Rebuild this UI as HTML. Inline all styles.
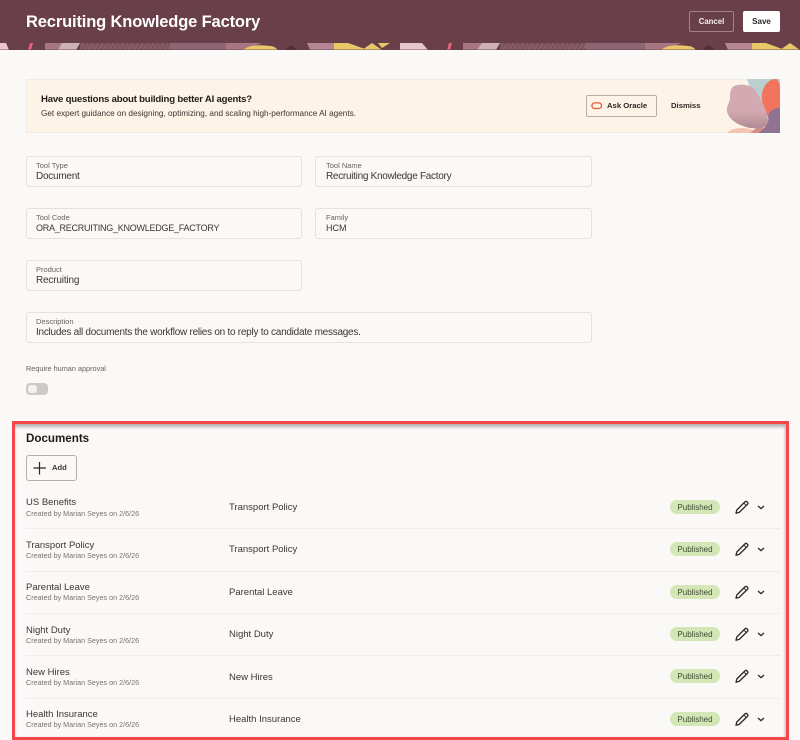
<!DOCTYPE html>
<html lang="en"><head><meta charset="utf-8"><title>Recruiting Knowledge Factory</title>
<style>
html,body{margin:0;padding:0}
body{width:800px;height:740px;position:relative;overflow:hidden;background:#fbf9f8;font-family:"Liberation Sans",sans-serif;color:#2b2825}
.a{position:absolute;white-space:nowrap}
.f{position:absolute;box-sizing:border-box;height:31px;border:1px solid #e4e2df;border-radius:3px;background:#fbf9f8}
.f i{position:absolute;left:9px;top:4px;font:normal 7.5px/9px "Liberation Sans",sans-serif;color:#66625e;white-space:nowrap}
.f b{position:absolute;left:9px;top:13px;font:normal 10px/13px "Liberation Sans",sans-serif;color:#3a3632;white-space:nowrap;letter-spacing:-.25px}
.t{left:26px;font-size:9.5px;line-height:12px;color:#3a3632}
.s{left:26px;font-size:7.2px;line-height:9px;color:#77736f}
.n{left:229px;font-size:9.5px;line-height:12px;color:#3a3632}
.p{left:670px;width:50px;height:14px;border-radius:7px;background:#d3e6b5;color:#3f4a33;font-size:8px;line-height:15px;text-align:center}
.d{left:26px;width:755px;height:1px;background:#f0eeeb}
svg{position:absolute;display:block}
</style></head><body>

<div class="a" style="left:0;top:0;width:800px;height:50px;background:#693f4a"></div>
<svg style="left:0;top:43px" width="800" height="7" viewBox="0 0 800 7">
<defs><pattern id="h" width="5" height="7" patternUnits="userSpaceOnUse"><rect width="5" height="7" fill="#7a4e59"/><path d="M0 7L3 0M3 7L5 2" stroke="#936c77" stroke-width=".8"/></pattern></defs>
<rect width="800" height="7" fill="#693f4a"/>
<path d="M0 0H6L9 7H0Z" fill="#eac6cd"/><path d="M28 7L30 0H33L31 7Z" fill="#e8647c"/>
<path d="M45 0H68L60 7H45Z" fill="#a87683"/><path d="M62 0H80L76 7H58Z" fill="#cdb1b9"/>
<rect x="80" width="90" height="7" fill="url(#h)"/><path d="M170 0H226V7H170Z" fill="#8c6672"/>
<path d="M226 0H262L243 7H226Z" fill="#a87683"/>
<path d="M243 7C250 1 262 2 270 3C274 3 276 5 278 7Z" fill="#e8c869"/>
<path d="M285 7L291 2L298 7Z" fill="#4f2e38"/>
<path d="M307 0H335L348 7H310Z" fill="#b68593"/>
<path d="M334 0H348L368 7H334Z" fill="#e8c869"/><path d="M362 7L372 0L382 7Z" fill="#e8c869"/><path d="M378 0H390L382 5Z" fill="#e8c869"/>
<path d="M400 0H422L428 7H400Z" fill="#e8c6cd"/><path d="M447 7L449 0H452L450 7Z" fill="#e8647c"/>
<path d="M463 0H490L480 7H463Z" fill="#a87683"/><path d="M482 0H500L496 7H477Z" fill="#cdb1b9"/>
<rect x="500" width="85" height="7" fill="url(#h)"/><path d="M585 0H645V7H585Z" fill="#8c6672"/>
<path d="M645 0H682L662 7H645Z" fill="#a87683"/>
<path d="M661 7C668 1 680 2 688 3C692 3 694 5 696 7Z" fill="#e8c869"/>
<path d="M702 7L708 2L716 7Z" fill="#4f2e38"/>
<path d="M725 0H752L765 7H728Z" fill="#b68593"/>
<path d="M752 0H766L785 7H752Z" fill="#e8c869"/><path d="M780 7L790 0L800 7Z" fill="#e8c869"/>
<rect y="6.4" width="800" height=".6" fill="#693f4a" opacity=".7"/>
</svg>
<div class="a" style="left:26px;top:11px;font-size:16.5px;line-height:22px;font-weight:700;color:#fff;letter-spacing:-.15px">Recruiting Knowledge Factory</div>
<div class="a" style="left:689px;top:11px;width:45px;height:21px;box-sizing:border-box;border:1px solid #a58189;border-radius:2px;color:#f5eeee;font-size:7.8px;font-weight:700;line-height:19px;text-align:center">Cancel</div>
<div class="a" style="left:743px;top:11px;width:37px;height:21px;background:#fff;border-radius:2px;color:#2b2825;font-size:8px;font-weight:700;line-height:21px;text-align:center">Save</div>

<div class="a" style="left:26px;top:79px;width:754px;height:54px;box-sizing:border-box;background:#fdf3e6;border:1px solid #f0ebe4;overflow:hidden"></div>
<svg style="left:700px;top:79px" width="80" height="54" viewBox="0 0 80 54">
<defs><linearGradient id="g" x1="0" y1="0" x2="0" y2="1"><stop offset=".6" stop-color="#d4aab2"/><stop offset="1" stop-color="#b08a92"/></linearGradient></defs>
<path d="M47 0H80V36H60Z" fill="#b9cfd0"/>
<path d="M62 14C64 5 70 0 76 0C80 2 80 8 80 14V38H68C64 30 61 22 62 14Z" fill="#f2745c"/>
<path d="M27 54C32 49 42 48 50 50L60 54Z" fill="#f5c5b0"/>
<path d="M50 54L56 49H68V54Z" fill="#d98f80"/>
<path d="M34 7C42 4 52 6 56 12C62 22 68 34 68 42C68 50 60 50 50 49C40 47 30 42 27 33C26 27 30 24 30 18C30 12 31 9 34 7Z" fill="url(#g)"/>
<path d="M68 37C69 32 74 29 80 29V54H59C62 50 70 47 68 37Z" fill="#8e7393"/>
</svg>
<div class="a" style="left:41px;top:94px;font-size:9.6px;line-height:12px;font-weight:700;color:#1f1c19;letter-spacing:-.2px">Have questions about building better AI agents?</div>
<div class="a" style="left:41px;top:108px;font-size:8.2px;line-height:11px;color:#3a3632">Get expert guidance on designing, optimizing, and scaling high-performance AI agents.</div>
<div class="a" style="left:586px;top:95px;width:71px;height:22px;box-sizing:border-box;border:1px solid #b4afa9;border-radius:2px"></div>
<svg style="left:591px;top:101px" width="12" height="10" viewBox="0 0 12 10"><rect x=".9" y="1.9" width="9.6" height="5.6" rx="2.8" fill="none" stroke="#e8573f" stroke-width="1.3"/></svg>
<div class="a" style="left:607px;top:100px;font-size:7.7px;line-height:12px;font-weight:700;color:#2b2825">Ask Oracle</div>
<div class="a" style="left:671px;top:100px;font-size:7.7px;line-height:12px;font-weight:700;color:#2b2825">Dismiss</div>

<div class="f" style="left:26px;top:156px;width:276px"><i>Tool Type</i><b>Document</b></div>
<div class="f" style="left:315px;top:156px;width:277px"><i style="left:10px">Tool Name</i><b style="left:10px;letter-spacing:-.29px">Recruiting Knowledge Factory</b></div>
<div class="f" style="left:26px;top:208px;width:276px"><i>Tool Code</i><b style="font-size:9px;letter-spacing:-.25px">ORA_RECRUITING_KNOWLEDGE_FACTORY</b></div>
<div class="f" style="left:315px;top:208px;width:277px"><i style="left:10px">Family</i><b style="left:10px;font-size:9px;letter-spacing:0">HCM</b></div>
<div class="f" style="left:26px;top:260px;width:276px"><i>Product</i><b style="letter-spacing:-.18px">Recruiting</b></div>
<div class="f" style="left:26px;top:312px;width:566px"><i>Description</i><b style="letter-spacing:-.26px">Includes all documents the workflow relies on to reply to candidate messages.</b></div>
<div class="a" style="left:26px;top:364px;font-size:7.3px;line-height:9px;color:#66625e">Require human approval</div>
<div class="a" style="left:26px;top:383px;width:22px;height:12px;border-radius:4px;background:#cdcbc8"></div>
<div class="a" style="left:28px;top:385px;width:9px;height:8px;border-radius:3px;background:#f4f2f0"></div>

<div class="a" style="left:12px;top:421px;width:777px;height:319px;box-sizing:border-box;border:3px solid #f64749;box-shadow:inset 0 4px 3px -1px #b4b2b0,inset -2px 0 2px -1px #c0bebc"></div>
<div class="a" style="left:26px;top:431px;font-size:11.6px;line-height:15px;font-weight:700;color:#1f1c19">Documents</div>
<div class="a" style="left:26px;top:455px;width:51px;height:26px;box-sizing:border-box;border:1px solid #b4afa9;border-radius:3px"></div>
<svg style="left:33px;top:460px" width="14" height="16" viewBox="0 0 14 16"><path d="M6.5 2V14.5M.5 8H12.8" fill="none" stroke="#2b2825" stroke-width="1.2"/></svg>
<div class="a" style="left:52px;top:462px;font-size:7.6px;line-height:12px;font-weight:700;color:#3a3632">Add</div>

<div class="a t" style="top:497px">US Benefits</div><div class="a s" style="top:509px">Created by Marian Seyes on 2/6/26</div><div class="a n" style="top:502px">Transport Policy</div><div class="a p" style="top:500px">Published</div>
<div class="a d" style="top:528px"></div>
<div class="a t" style="top:540px">Transport Policy</div><div class="a s" style="top:551px">Created by Marian Seyes on 2/6/26</div><div class="a n" style="top:544px">Transport Policy</div><div class="a p" style="top:542px">Published</div>
<div class="a d" style="top:571px"></div>
<div class="a t" style="top:582px">Parental Leave</div><div class="a s" style="top:593px">Created by Marian Seyes on 2/6/26</div><div class="a n" style="top:587px">Parental Leave</div><div class="a p" style="top:585px">Published</div>
<div class="a d" style="top:613px"></div>
<div class="a t" style="top:625px">Night Duty</div><div class="a s" style="top:636px">Created by Marian Seyes on 2/6/26</div><div class="a n" style="top:629px">Night Duty</div><div class="a p" style="top:627px">Published</div>
<div class="a d" style="top:655px"></div>
<div class="a t" style="top:667px">New Hires</div><div class="a s" style="top:678px">Created by Marian Seyes on 2/6/26</div><div class="a n" style="top:672px">New Hires</div><div class="a p" style="top:669px">Published</div>
<div class="a d" style="top:698px"></div>
<div class="a t" style="top:709px">Health Insurance</div><div class="a s" style="top:720px">Created by Marian Seyes on 2/6/26</div><div class="a n" style="top:714px">Health Insurance</div><div class="a p" style="top:712px">Published</div>

<svg style="left:733px;top:498px" width="36" height="18" viewBox="0 0 36 18"><g fill="none" stroke="#2b2825"><path d="M3 15.2L3.8 12L11.8 4C12.6 3.2 13.4 3.2 14.1 3.9L14.4 4.2C15.1 4.9 15.1 5.7 14.3 6.5L6.2 14.4Z" stroke-width="1.3" stroke-linejoin="round"/><path d="M10.8 5L13.2 7.4" stroke-width=".9"/><path d="M25 8L28 10.6L31 8" stroke-width="1.3"/></g></svg>
<svg style="left:733px;top:540px" width="36" height="18" viewBox="0 0 36 18"><g fill="none" stroke="#2b2825"><path d="M3 15.2L3.8 12L11.8 4C12.6 3.2 13.4 3.2 14.1 3.9L14.4 4.2C15.1 4.9 15.1 5.7 14.3 6.5L6.2 14.4Z" stroke-width="1.3" stroke-linejoin="round"/><path d="M10.8 5L13.2 7.4" stroke-width=".9"/><path d="M25 8L28 10.6L31 8" stroke-width="1.3"/></g></svg>
<svg style="left:733px;top:583px" width="36" height="18" viewBox="0 0 36 18"><g fill="none" stroke="#2b2825"><path d="M3 15.2L3.8 12L11.8 4C12.6 3.2 13.4 3.2 14.1 3.9L14.4 4.2C15.1 4.9 15.1 5.7 14.3 6.5L6.2 14.4Z" stroke-width="1.3" stroke-linejoin="round"/><path d="M10.8 5L13.2 7.4" stroke-width=".9"/><path d="M25 8L28 10.6L31 8" stroke-width="1.3"/></g></svg>
<svg style="left:733px;top:625px" width="36" height="18" viewBox="0 0 36 18"><g fill="none" stroke="#2b2825"><path d="M3 15.2L3.8 12L11.8 4C12.6 3.2 13.4 3.2 14.1 3.9L14.4 4.2C15.1 4.9 15.1 5.7 14.3 6.5L6.2 14.4Z" stroke-width="1.3" stroke-linejoin="round"/><path d="M10.8 5L13.2 7.4" stroke-width=".9"/><path d="M25 8L28 10.6L31 8" stroke-width="1.3"/></g></svg>
<svg style="left:733px;top:667px" width="36" height="18" viewBox="0 0 36 18"><g fill="none" stroke="#2b2825"><path d="M3 15.2L3.8 12L11.8 4C12.6 3.2 13.4 3.2 14.1 3.9L14.4 4.2C15.1 4.9 15.1 5.7 14.3 6.5L6.2 14.4Z" stroke-width="1.3" stroke-linejoin="round"/><path d="M10.8 5L13.2 7.4" stroke-width=".9"/><path d="M25 8L28 10.6L31 8" stroke-width="1.3"/></g></svg>
<svg style="left:733px;top:710px" width="36" height="18" viewBox="0 0 36 18"><g fill="none" stroke="#2b2825"><path d="M3 15.2L3.8 12L11.8 4C12.6 3.2 13.4 3.2 14.1 3.9L14.4 4.2C15.1 4.9 15.1 5.7 14.3 6.5L6.2 14.4Z" stroke-width="1.3" stroke-linejoin="round"/><path d="M10.8 5L13.2 7.4" stroke-width=".9"/><path d="M25 8L28 10.6L31 8" stroke-width="1.3"/></g></svg>
</body></html>
